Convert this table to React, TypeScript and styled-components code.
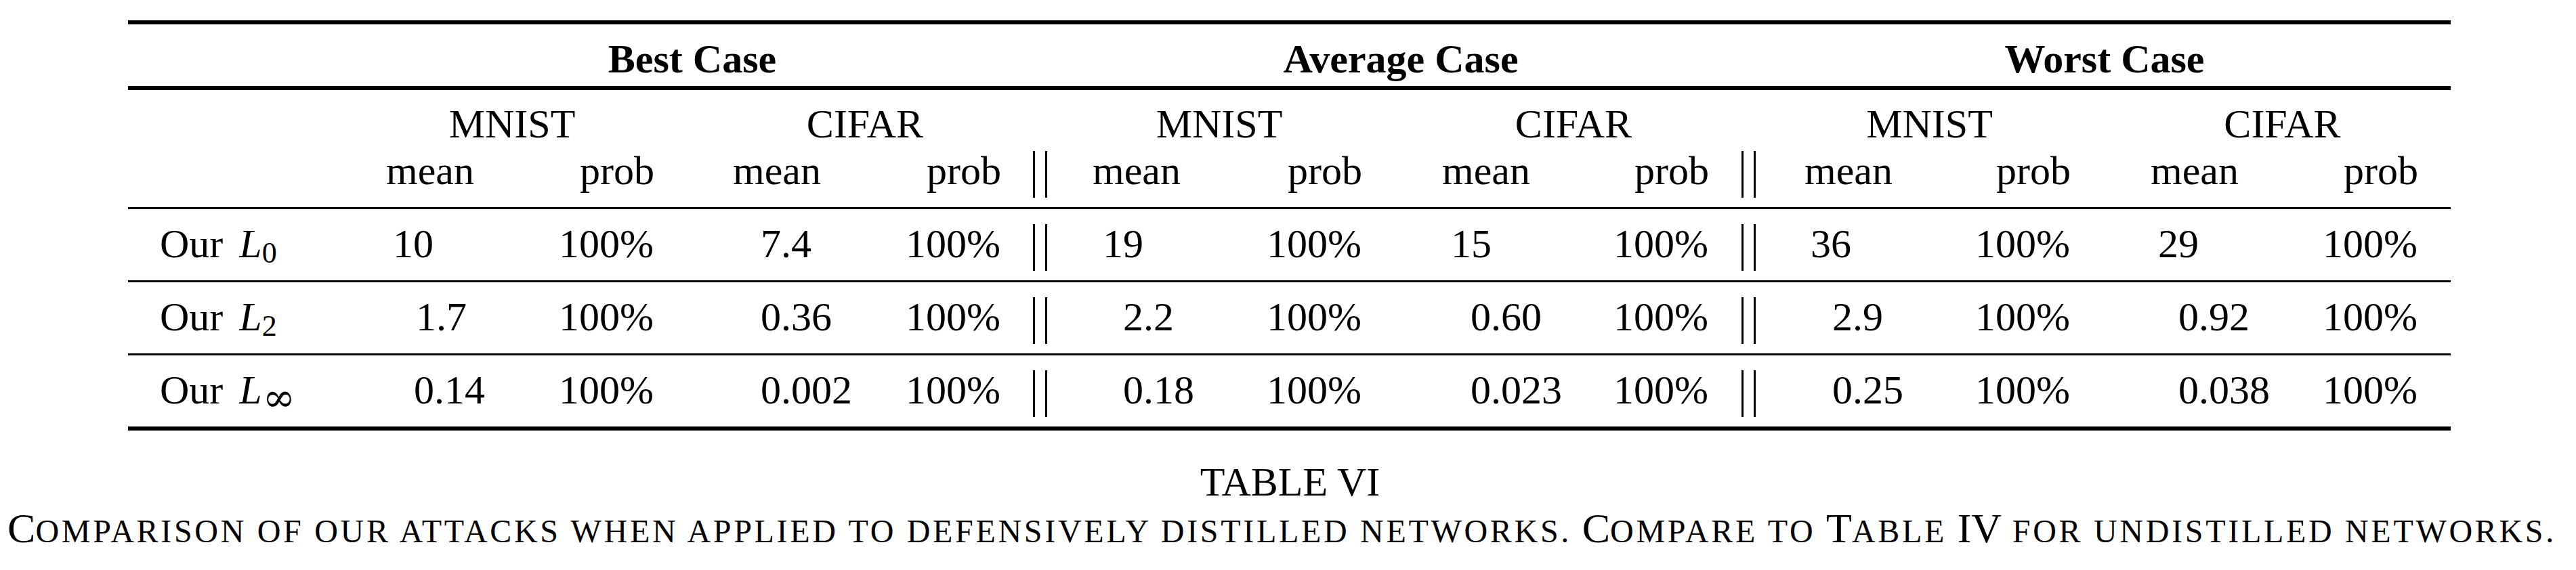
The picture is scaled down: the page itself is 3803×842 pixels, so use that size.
import React from "react";
import styled, { createGlobalStyle } from "styled-components";

const GlobalStyle = createGlobalStyle`
  html, body {
    margin: 0;
    padding: 0;
    background: #ffffff;
  }
  body {
    font-family: "Liberation Serif", "Times New Roman", serif;
    color: #000000;
  }
`;

/* label | mean prob gap mean prob sep | mean prob gap mean prob sep | mean prob gap mean prob tail */
const COLS =
  "381px 230px 166px 116px 218px 178px 135px 237px 161px 118px 221px 173px 141px 226px 167px 118px 225px 170px 48px";

const Page = styled.div`
  width: 3803px;
  height: 842px;
  padding-top: 30px;
  box-sizing: border-box;
  overflow: hidden;
`;

const Table = styled.div`
  margin-left: 189px;
  width: 3429px;
  border-top: 6px solid #000;
  border-bottom: 6px solid #000;
  font-size: 60px;
  line-height: 60px;
`;

const Row = styled.div<{ $h: number; $pt: number; $rule?: number }>`
  display: grid;
  grid-template-columns: ${COLS};
  box-sizing: border-box;
  height: ${(p) => p.$h}px;
  padding-top: ${(p) => p.$pt}px;
  border-top: ${(p) => (p.$rule ? `${p.$rule}px solid #000` : "none")};
`;

const Cell = styled.div<{
  $col: string;
  $align?: "left" | "right" | "center";
  $pl?: number;
  $pr?: number;
  $bold?: boolean;
}>`
  grid-column: ${(p) => p.$col};
  text-align: ${(p) => p.$align ?? "left"};
  padding-left: ${(p) => p.$pl ?? 0}px;
  padding-right: ${(p) => p.$pr ?? 0}px;
  font-weight: ${(p) => (p.$bold ? 700 : 400)};
  white-space: nowrap;
`;

const DoubleBar = styled.span`
  display: inline-block;
  box-sizing: border-box;
  width: 21px;
  height: 69px;
  border-left: 3px solid #000;
  border-right: 3px solid #000;
  vertical-align: -20px;
`;

const MathL = styled.span`
  font-style: italic;
  margin-left: 9px;
`;

const Sub = styled.span`
  font-size: 44px;
  vertical-align: -8px;
  line-height: 0;
`;

const InfSub = styled.span`
  font-family: "DejaVu Serif", "Liberation Serif", serif;
  font-size: 58px;
  vertical-align: -11px;
  line-height: 0;
  margin-left: 1px;
`;

const CaptionTitle = styled.div`
  margin-top: 46px;
  text-align: center;
  font-size: 60px;
  line-height: 60px;
  padding-left: 6px;
`;

const CaptionText = styled.div`
  margin-top: 8px;
  text-align: center;
  font-size: 62px;
  line-height: 60px;
  white-space: nowrap;
  padding-right: 18px;
`;

const SmallCap = styled.span`
  font-size: 48px;
  letter-spacing: 3.7px;
  text-transform: uppercase;
`;

type Val = [string, number];
type CaseData = { mnist: Val; cifar: Val };
type DataRowT = { sub: React.ReactNode; cases: CaseData[] };

const rows: DataRowT[] = [
  {
    sub: <Sub>0</Sub>,
    cases: [
      { mnist: ["10", 10], cifar: ["7.4", 41] },
      { mnist: ["19", 15], cifar: ["15", 13] },
      { mnist: ["36", 9], cifar: ["29", 11] },
    ],
  },
  {
    sub: <Sub>2</Sub>,
    cases: [
      { mnist: ["1.7", 44], cifar: ["0.36", 41] },
      { mnist: ["2.2", 45], cifar: ["0.60", 42] },
      { mnist: ["2.9", 41], cifar: ["0.92", 41] },
    ],
  },
  {
    sub: <InfSub>∞</InfSub>,
    cases: [
      { mnist: ["0.14", 41], cifar: ["0.002", 41] },
      { mnist: ["0.18", 45], cifar: ["0.023", 42] },
      { mnist: ["0.25", 41], cifar: ["0.038", 41] },
    ],
  },
];

const caseNames = ["Best Case", "Average Case", "Worst Case"];
const caseShift = [-2, 0, -10];
const sepOffsets = [47, 48];

const base = (k: number) => 2 + 6 * k;

const shiftPad = (s: number) => (s < 0 ? { $pr: -2 * s } : { $pl: 2 * s });

export default function App() {
  return (
    <>
      <GlobalStyle />
      <Page>
        <Table>
          <Row $h={91} $pt={21}>
            {caseNames.map((name, k) => (
              <Cell
                key={name}
                $col={`${base(k)} / ${base(k) + 5}`}
                $align="center"
                $bold
                {...shiftPad(caseShift[k])}
              >
                {name}
              </Cell>
            ))}
          </Row>
          <Row $h={88} $pt={20} $rule={6}>
            {caseNames.map((name, k) => (
              <React.Fragment key={name}>
                <Cell $col={`${base(k)} / ${base(k) + 2}`} $align="center" {...shiftPad(-12)}>
                  MNIST
                </Cell>
                <Cell $col={`${base(k) + 3} / ${base(k) + 5}`} $align="center" {...shiftPad(-3)}>
                  CIFAR
                </Cell>
              </React.Fragment>
            ))}
          </Row>
          <Row $h={91} $pt={7}>
            {caseNames.map((name, k) => (
              <React.Fragment key={name}>
                <Cell $col={`${base(k)}`}>mean</Cell>
                <Cell $col={`${base(k) + 1}`} $align="right">
                  prob
                </Cell>
                <Cell $col={`${base(k) + 3}`}>mean</Cell>
                <Cell $col={`${base(k) + 4}`} $align="right">
                  prob
                </Cell>
                {k < 2 && (
                  <Cell $col={`${base(k) + 5}`} $pl={sepOffsets[k]}>
                    <DoubleBar />
                  </Cell>
                )}
              </React.Fragment>
            ))}
          </Row>
          {rows.map((r, i) => (
            <Row key={i} $h={108} $pt={21} $rule={3}>
              <Cell $col="1" $pl={47}>
                Our<MathL> L</MathL>
                {r.sub}
              </Cell>
              {r.cases.map((c, k) => (
                <React.Fragment key={k}>
                  <Cell $col={`${base(k)}`} $pl={c.mnist[1]}>
                    {c.mnist[0]}
                  </Cell>
                  <Cell $col={`${base(k) + 1}`} $align="right" $pr={1}>
                    100%
                  </Cell>
                  <Cell $col={`${base(k) + 3}`} $pl={c.cifar[1]}>
                    {c.cifar[0]}
                  </Cell>
                  <Cell $col={`${base(k) + 4}`} $align="right" $pr={1}>
                    100%
                  </Cell>
                  {k < 2 && (
                    <Cell $col={`${base(k) + 5}`} $pl={sepOffsets[k]}>
                      <DoubleBar />
                    </Cell>
                  )}
                </React.Fragment>
              ))}
            </Row>
          ))}
        </Table>
        <CaptionTitle>TABLE VI</CaptionTitle>
        <CaptionText>
          C<SmallCap>omparison of our attacks when applied to defensively distilled networks. </SmallCap>
          C<SmallCap>ompare to </SmallCap>T<SmallCap>able </SmallCap>IV
          <SmallCap> for undistilled networks.</SmallCap>
        </CaptionText>
      </Page>
    </>
  );
}
